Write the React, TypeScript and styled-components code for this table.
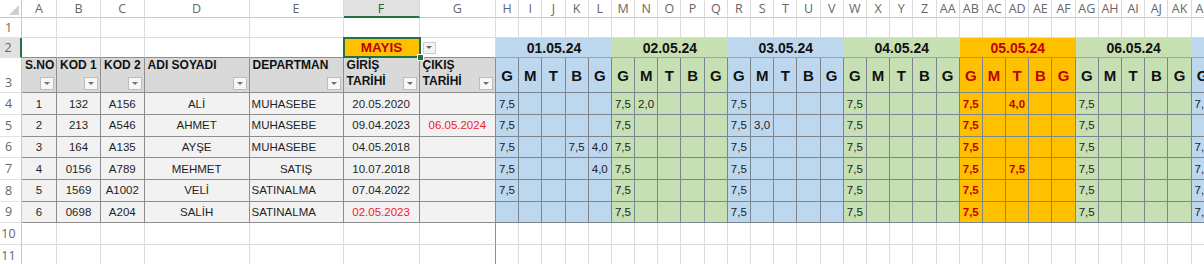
import React from 'react';
import styled, { createGlobalStyle } from 'styled-components';

const BLUE = '#bdd7ee';
const GREEN = '#c6e0b4';
const ORANGE = '#ffc000';
const DARK_RED = '#c00000';
const RED = '#ec1c2a';
const GRID = '#dcdcdc';
const TABLE_LINE = '#8e8e8e';
const DAY_LINE = '#7b8590';
const SELECT = '#217346';

const GlobalStyle = createGlobalStyle`
  html, body {
    margin: 0;
    padding: 0;
    background: #fff;
    overflow: hidden;
  }
  body {
    font-family: "Liberation Sans", Arial, sans-serif;
    color: #1f1f1f;
  }
`;

const Viewport = styled.div`
  width: 1204px;
  overflow: hidden;
`;

const Sheet = styled.div`
  display: grid;
  grid-template-columns: 22px 35px 44px 43.6px 105px 94px 76px 76.4px repeat(35, 23.2px);
  grid-template-rows: 18px 20px 20px 35.3px repeat(8, 21.67px);
  width: max-content;

  & > * {
    box-sizing: border-box;
    min-width: 0;
  }
`;

const Corner = styled.div`
  display: flex;
  align-items: flex-end;
  justify-content: flex-end;
  padding: 0 2px 2px 0;
  border-right: 1px solid #c8c8c8;
  border-bottom: 1px solid #c8c8c8;
`;

const ColHead = styled.div<{ $active?: boolean }>`
  display: flex;
  align-items: center;
  justify-content: center;
  font-family: "Open Sans", "Liberation Sans", sans-serif;
  font-size: 12.5px;
  color: ${p => (p.$active ? '#1e5e38' : '#666')};
  background: ${p => (p.$active ? '#e1e1e1' : '#fff')};
  border-right: 1px solid #dadada;
  border-bottom: ${p => (p.$active ? `2px solid ${SELECT}` : '1px solid #c8c8c8')};
  white-space: nowrap;
  overflow: hidden;
`;

const RowHead = styled.div<{ $active?: boolean; $tall?: boolean }>`
  display: flex;
  align-items: ${p => (p.$tall ? 'flex-end' : 'center')};
  justify-content: center;
  padding: 0 4px ${p => (p.$tall ? '1px' : '0')} 0;
  font-family: "Open Sans", "Liberation Sans", sans-serif;
  font-size: 12.5px;
  color: #666;
  background: ${p => (p.$active ? '#e1e1e1' : '#fff')};
  border-right: ${p => (p.$active ? `2px solid ${SELECT}` : '1px solid #c8c8c8')};
  border-bottom: 1px solid #e2e2e2;
`;

const Blank = styled.div<{ $under?: boolean; $edge?: boolean }>`
  display: flex;
  align-items: center;
  background: #fff;
  border-right: 1px solid ${p => (p.$edge ? TABLE_LINE : GRID)};
  border-bottom: 1px solid ${p => (p.$under ? TABLE_LINE : GRID)};
`;

const MonthCell = styled.div`
  position: relative;
  display: flex;
  align-items: center;
  justify-content: center;
  background: ${ORANGE};
  color: ${DARK_RED};
  font-weight: 700;
  font-size: 13.5px;
  border-bottom: 1px solid ${TABLE_LINE};

  &::after {
    content: '';
    position: absolute;
    inset: -1px;
    border: 2px solid ${SELECT};
    z-index: 2;
  }

  &::before {
    content: '';
    position: absolute;
    right: -4px;
    bottom: -4px;
    width: 5px;
    height: 5px;
    background: ${SELECT};
    border: 1px solid #fff;
    z-index: 3;
  }
`;

const DropButton = styled.span`
  box-sizing: border-box;
  width: 13px;
  height: 12px;
  margin-left: 3px;
  display: flex;
  align-items: center;
  justify-content: center;
  background: #f3f3f3;
  border: 1px solid #cdcdcd;

  &::after {
    content: '';
    border-left: 3px solid transparent;
    border-right: 3px solid transparent;
    border-top: 3px solid #666;
  }
`;

const HeadCell = styled.div`
  position: relative;
  padding: 0 2px 0 3px;
  background: #d9d9d9;
  font-weight: 700;
  font-size: 12px;
  line-height: 15.5px;
  color: #111;
  white-space: pre;
  overflow: hidden;
  border-right: 1px solid ${TABLE_LINE};
  border-bottom: 1px solid ${TABLE_LINE};
`;

const FilterButton = styled.span`
  position: absolute;
  right: 2px;
  bottom: 2px;
  box-sizing: border-box;
  width: 14px;
  height: 13px;
  display: flex;
  align-items: center;
  justify-content: center;
  background: #f7f7f7;
  border: 1px solid #bcbcbc;

  &::after {
    content: '';
    border-left: 3px solid transparent;
    border-right: 3px solid transparent;
    border-top: 3px solid #707070;
  }
`;

const DataCell = styled.div<{ $align?: 'left' | 'center'; $red?: boolean }>`
  display: flex;
  align-items: center;
  justify-content: ${p => (p.$align === 'left' ? 'flex-start' : 'center')};
  padding: 0 2px;
  background: #f2f2f2;
  font-size: 11.5px;
  color: ${p => (p.$red ? RED : '#1f1f1f')};
  white-space: nowrap;
  border-right: 1px solid ${TABLE_LINE};
  border-bottom: 1px solid ${TABLE_LINE};
`;

const DateHead = styled.div<{ $bg: string; $hot?: boolean }>`
  grid-column: span 5;
  display: flex;
  align-items: center;
  justify-content: center;
  background: ${p => p.$bg};
  color: ${p => (p.$hot ? DARK_RED : '#111')};
  font-weight: 700;
  font-size: 14px;
  border-bottom: 1px solid rgba(0, 0, 0, 0.22);
`;

const DayLetter = styled.div<{ $bg: string; $hot?: boolean }>`
  display: flex;
  align-items: center;
  justify-content: center;
  background: ${p => p.$bg};
  color: ${p => (p.$hot ? DARK_RED : '#111')};
  font-weight: 700;
  font-size: 15px;
  border-right: 1px solid ${DAY_LINE};
  border-bottom: 1px solid ${DAY_LINE};
`;

const DayCell = styled.div<{ $bg: string; $hot?: boolean }>`
  display: flex;
  align-items: center;
  padding-left: 3px;
  background: ${p => p.$bg};
  color: ${p => (p.$hot ? DARK_RED : '#222')};
  font-size: 11.5px;
  font-weight: ${p => (p.$hot ? 700 : 400)};
  white-space: nowrap;
  overflow: hidden;
  border-right: 1px solid ${DAY_LINE};
  border-bottom: 1px solid ${DAY_LINE};
`;

const DAY_COUNT = 35;

const colName = (index: number) => {
  let n = index + 1;
  let s = '';
  while (n > 0) {
    const m = (n - 1) % 26;
    s = String.fromCharCode(65 + m) + s;
    n = Math.floor((n - 1) / 26);
  }
  return s;
};

const groupColor = (g: number) => (g === 4 ? ORANGE : g % 2 === 0 ? BLUE : GREEN);

type Person = {
  no: string;
  kod1: string;
  kod2: string;
  name: string;
  dept: string;
  deptAlign: 'left' | 'center';
  start: string;
  startRed?: boolean;
  end: string;
  hours: Record<number, string>;
};

const people: Person[] = [
  { no: '1', kod1: '132', kod2: 'A156', name: 'ALİ', dept: 'MUHASEBE', deptAlign: 'left', start: '20.05.2020', end: '',
    hours: { 0: '7,5', 5: '7,5', 6: '2,0', 10: '7,5', 15: '7,5', 20: '7,5', 22: '4,0', 25: '7,5', 30: '7,5' } },
  { no: '2', kod1: '213', kod2: 'A546', name: 'AHMET', dept: 'MUHASEBE', deptAlign: 'left', start: '09.04.2023', end: '06.05.2024',
    hours: { 0: '7,5', 5: '7,5', 10: '7,5', 11: '3,0', 15: '7,5', 20: '7,5', 25: '7,5' } },
  { no: '3', kod1: '164', kod2: 'A135', name: 'AYŞE', dept: 'MUHASEBE', deptAlign: 'left', start: '04.05.2018', end: '',
    hours: { 0: '7,5', 3: '7,5', 4: '4,0', 5: '7,5', 10: '7,5', 15: '7,5', 20: '7,5', 25: '7,5', 30: '7,5' } },
  { no: '4', kod1: '0156', kod2: 'A789', name: 'MEHMET', dept: 'SATIŞ', deptAlign: 'center', start: '10.07.2018', end: '',
    hours: { 0: '7,5', 4: '4,0', 5: '7,5', 10: '7,5', 15: '7,5', 20: '7,5', 22: '7,5', 25: '7,5', 30: '7,5' } },
  { no: '5', kod1: '1569', kod2: 'A1002', name: 'VELİ', dept: 'SATINALMA', deptAlign: 'left', start: '07.04.2022', end: '',
    hours: { 0: '7,5', 5: '7,5', 10: '7,5', 15: '7,5', 20: '7,5', 25: '7,5', 30: '7,5' } },
  { no: '6', kod1: '0698', kod2: 'A204', name: 'SALİH', dept: 'SATINALMA', deptAlign: 'left', start: '02.05.2023', startRed: true, end: '',
    hours: { 5: '7,5', 10: '7,5', 15: '7,5', 20: '7,5', 25: '7,5', 30: '7,5' } },
];

const headers = ['S.NO', 'KOD 1', 'KOD 2', 'ADI SOYADI', 'DEPARTMAN', 'GİRİŞ\nTARİHİ', 'ÇIKIŞ\nTARİHİ'];
const dayIdx = Array.from({ length: DAY_COUNT }, (_, i) => i);
const groups = Array.from({ length: DAY_COUNT / 5 }, (_, g) => g);
const letters = 'GMTBG';

const App: React.FC = () => (
  <>
    <GlobalStyle />
    <Viewport>
      <Sheet>
        <Corner>
          <svg width="10" height="10" viewBox="0 0 10 10">
            <polygon points="10,0 10,10 0,10" fill="#cfcfcf" />
          </svg>
        </Corner>
        {Array.from({ length: 7 + DAY_COUNT }, (_, i) => (
          <ColHead key={`ch${i}`} $active={i === 5}>{colName(i)}</ColHead>
        ))}

        <RowHead>1</RowHead>
        {Array.from({ length: 7 + DAY_COUNT }, (_, i) => <Blank key={`r1-${i}`} />)}

        <RowHead $active>2</RowHead>
        {[0, 1, 2, 3, 4].map(i => <Blank key={`r2-${i}`} $under />)}
        <MonthCell>MAYIS</MonthCell>
        <Blank $under><DropButton /></Blank>
        {groups.map(g => (
          <DateHead key={`dh${g}`} $bg={groupColor(g)} $hot={g === 4}>
            {`0${g + 1}.05.24`}
          </DateHead>
        ))}

        <RowHead $tall>3</RowHead>
        {headers.map(h => (
          <HeadCell key={h}>
            {h}
            <FilterButton />
          </HeadCell>
        ))}
        {dayIdx.map(d => {
          const g = Math.floor(d / 5);
          return (
            <DayLetter key={`dl${d}`} $bg={groupColor(g)} $hot={g === 4}>
              {letters[d % 5]}
            </DayLetter>
          );
        })}

        {people.map((p, r) => (
          <React.Fragment key={p.no}>
            <RowHead>{r + 4}</RowHead>
            <DataCell>{p.no}</DataCell>
            <DataCell>{p.kod1}</DataCell>
            <DataCell>{p.kod2}</DataCell>
            <DataCell>{p.name}</DataCell>
            <DataCell $align={p.deptAlign}>{p.dept}</DataCell>
            <DataCell $red={p.startRed}>{p.start}</DataCell>
            <DataCell $red>{p.end}</DataCell>
            {dayIdx.map(d => {
              const g = Math.floor(d / 5);
              return (
                <DayCell key={`d${d}`} $bg={groupColor(g)} $hot={g === 4}>
                  {p.hours[d] ?? ''}
                </DayCell>
              );
            })}
          </React.Fragment>
        ))}

        {[10, 11].map(n => (
          <React.Fragment key={`r${n}`}>
            <RowHead>{n}</RowHead>
            {Array.from({ length: 7 + DAY_COUNT }, (_, i) => (
              <Blank key={`b${n}-${i}`} $edge={i === 6} />
            ))}
          </React.Fragment>
        ))}
      </Sheet>
    </Viewport>
  </>
);

export default App;
